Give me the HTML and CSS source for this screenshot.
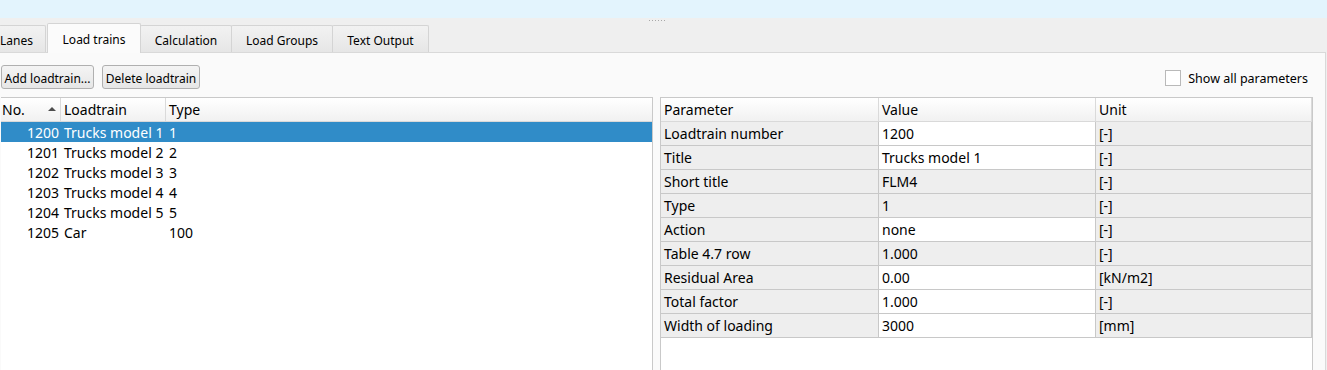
FILE: index.html
```html
<!DOCTYPE html>
<html lang="en">
<head>
    <meta charset="UTF-8" />
    <title>Load trains</title>
    <link rel="stylesheet" href="styles.css">
</head>
<body>
    <div class="topbar"></div>
    <div class="grip"><span></span><span></span><span></span><span></span><span></span><span></span></div>

    <div class="tabs">
        <div class="tab first">Lanes</div>
        <div class="tab active">Load trains</div>
        <div class="tab w-calc">Calculation</div>
        <div class="tab w-groups">Load Groups</div>
        <div class="tab w-text">Text Output</div>
    </div>

    <div class="pane">
        <div class="toolbar">
            <button class="btn btn-add">Add loadtrain...</button>
            <button class="btn btn-del">Delete loadtrain</button>
            <label class="check"><span class="box"></span>Show all parameters</label>
        </div>

        <div class="split">
            <div class="tree">
                <div class="tree-row tree-head">
                    <div class="c-no">No.<span class="sort"></span></div>
                    <div class="c-name">Loadtrain</div>
                    <div class="c-type">Type</div>
                </div>
                <div class="tree-row selected">
                    <div class="c-no num">1200</div><div class="c-name">Trucks model 1</div><div class="c-type">1</div>
                </div>
                <div class="tree-row">
                    <div class="c-no num">1201</div><div class="c-name">Trucks model 2</div><div class="c-type">2</div>
                </div>
                <div class="tree-row">
                    <div class="c-no num">1202</div><div class="c-name">Trucks model 3</div><div class="c-type">3</div>
                </div>
                <div class="tree-row">
                    <div class="c-no num">1203</div><div class="c-name">Trucks model 4</div><div class="c-type">4</div>
                </div>
                <div class="tree-row">
                    <div class="c-no num">1204</div><div class="c-name">Trucks model 5</div><div class="c-type">5</div>
                </div>
                <div class="tree-row">
                    <div class="c-no num">1205</div><div class="c-name">Car</div><div class="c-type">100</div>
                </div>
            </div>

            <div class="params">
                <div class="grid">
                    <div class="hd">Parameter</div><div class="hd">Value</div><div class="hd">Unit</div>

                    <div class="cell">Loadtrain number</div><div class="cell edit">1200</div><div class="cell">[-]</div>
                    <div class="cell">Title</div><div class="cell edit">Trucks model 1</div><div class="cell">[-]</div>
                    <div class="cell">Short title</div><div class="cell">FLM4</div><div class="cell">[-]</div>
                    <div class="cell">Type</div><div class="cell">1</div><div class="cell">[-]</div>
                    <div class="cell">Action</div><div class="cell edit">none</div><div class="cell">[-]</div>
                    <div class="cell">Table 4.7 row</div><div class="cell">1.000</div><div class="cell">[-]</div>
                    <div class="cell">Residual Area</div><div class="cell edit">0.00</div><div class="cell">[kN/m2]</div>
                    <div class="cell">Total factor</div><div class="cell edit">1.000</div><div class="cell">[-]</div>
                    <div class="cell">Width of loading</div><div class="cell edit">3000</div><div class="cell">[mm]</div>
                </div>
            </div>
        </div>
    </div>
</body>
</html>
```

FILE: styles.css
```css
* {
    box-sizing: border-box;
}

html, body {
    height: 100%;
    overflow: hidden;
}

body {
    margin: 0;
    background: #efefef;
    font-family: 'Noto Sans', 'Open Sans', sans-serif;
    font-size: 12px;
    color: #000;
}

.topbar {
    height: 18px;
    background: #e3f4fd;
}

/* splitter handle */
.grip {
    height: 5px;
    display: flex;
    justify-content: center;
    align-items: center;
    gap: 2px;
    padding-right: 14px;
}

.grip span {
    width: 1px;
    height: 1px;
    background: #a8a8a8;
}

.tabs {
    display: flex;
    align-items: flex-end;
    height: 29px;
    margin-left: -1px;
}

.tab {
    height: 27px;
    display: flex;
    align-items: center;
    justify-content: center;
    border: 1px solid #d4d4d4;
    border-bottom: none;
    border-radius: 2px 2px 0 0;
    background: linear-gradient(#f2f2f2, #e6e6e6);
    margin-right: -1px;
    padding-top: 3px;
}

.tab.first {
    width: 47px;
    justify-content: flex-start;
    padding-left: 1px;
    border-left: none;
    margin-right: 1px;
}

.tab.active {
    width: 94px;
    height: 30px;
    background: #fbfbfb;
    position: relative;
    z-index: 1;
    margin-bottom: -1px;
    padding-top: 1px;
}

.tab.w-calc { width: 92px; }
.tab.w-groups { width: 102px; }
.tab.w-text { width: 97px; }

.pane {
    width: 1327px;
    height: 330px;
    margin-left: -1px;
    border: 1px solid #d9d9d9;
    background: #fafafa;
    padding: 12px 12px 0 1px;
    display: flex;
    flex-direction: column;
}

.toolbar {
    display: flex;
    align-items: center;
    gap: 8px;
    height: 24px;
}

.btn {
    height: 24px;
    font: inherit;
    color: #000;
    border: 1px solid #b0b0b0;
    border-radius: 3px;
    background: linear-gradient(#f4f4f4, #e6e6e6);
    padding: 2px 2px 0;
}

.btn-add { width: 93px; }
.btn-del { width: 98px; }

.check {
    margin-left: auto;
    display: flex;
    align-items: center;
    gap: 7px;
    padding-right: 5px;
    padding-top: 2px;
    font-size: 12.5px;
}

.check .box {
    width: 16px;
    height: 16px;
    margin-top: -1px;
    background: #fff;
    border: 1px solid #b9b9b9;
}

.split {
    display: flex;
    gap: 7px;
    margin-top: 8px;
    flex: 1;
    font-size: 14px;
}

.tree {
    width: 652px;
    background: #fff;
    border: 1px solid #c9c9c9;
    border-left: none;
    border-bottom: none;
}

.tree-row {
    display: grid;
    grid-template-columns: 60px 105px 1fr;
    height: 20px;
    align-items: center;
}

.tree-head {
    height: 24px;
    align-items: stretch;
    background: linear-gradient(#ffffff, #f1f1f1);
    border-bottom: 1px solid #d9d9d9;
}

.tree-head > div {
    display: flex;
    align-items: center;
    padding-left: 3px;
    border-right: 1px solid #dadada;
}

.tree-head .c-no {
    padding-left: 1px;
    position: relative;
}

.tree-head .c-type {
    border-right: none;
}

.sort {
    position: absolute;
    left: 47px;
    top: 9px;
    width: 0;
    height: 0;
    border-left: 4px solid transparent;
    border-right: 4px solid transparent;
    border-bottom: 4px solid #4d4d4d;
}

.tree-row .num {
    text-align: right;
    padding-right: 2px;
}

.tree-row .c-name {
    padding-left: 3px;
}

.tree-row .c-type {
    padding-left: 3px;
}

.tree-row.selected {
    background: #308cc8;
    color: #fff;
}

.params {
    flex: 1;
    background: #fff;
    border: 1px solid #c9c9c9;
    border-bottom: none;
}

.grid {
    display: grid;
    grid-template-columns: 218px 217px 1fr;
    grid-auto-rows: 24px;
}

.hd {
    display: flex;
    align-items: center;
    padding-left: 3px;
    background: linear-gradient(#ffffff, #f1f1f1);
    border-right: 1px solid #dadada;
    border-bottom: 1px solid #d9d9d9;
}

.cell {
    display: flex;
    align-items: center;
    padding-left: 3px;
    background: #eeeeee;
    border-right: 1px solid #c8c8c8;
    border-bottom: 1px solid #c8c8c8;
}

.cell.edit {
    background: #fff;
}
```
